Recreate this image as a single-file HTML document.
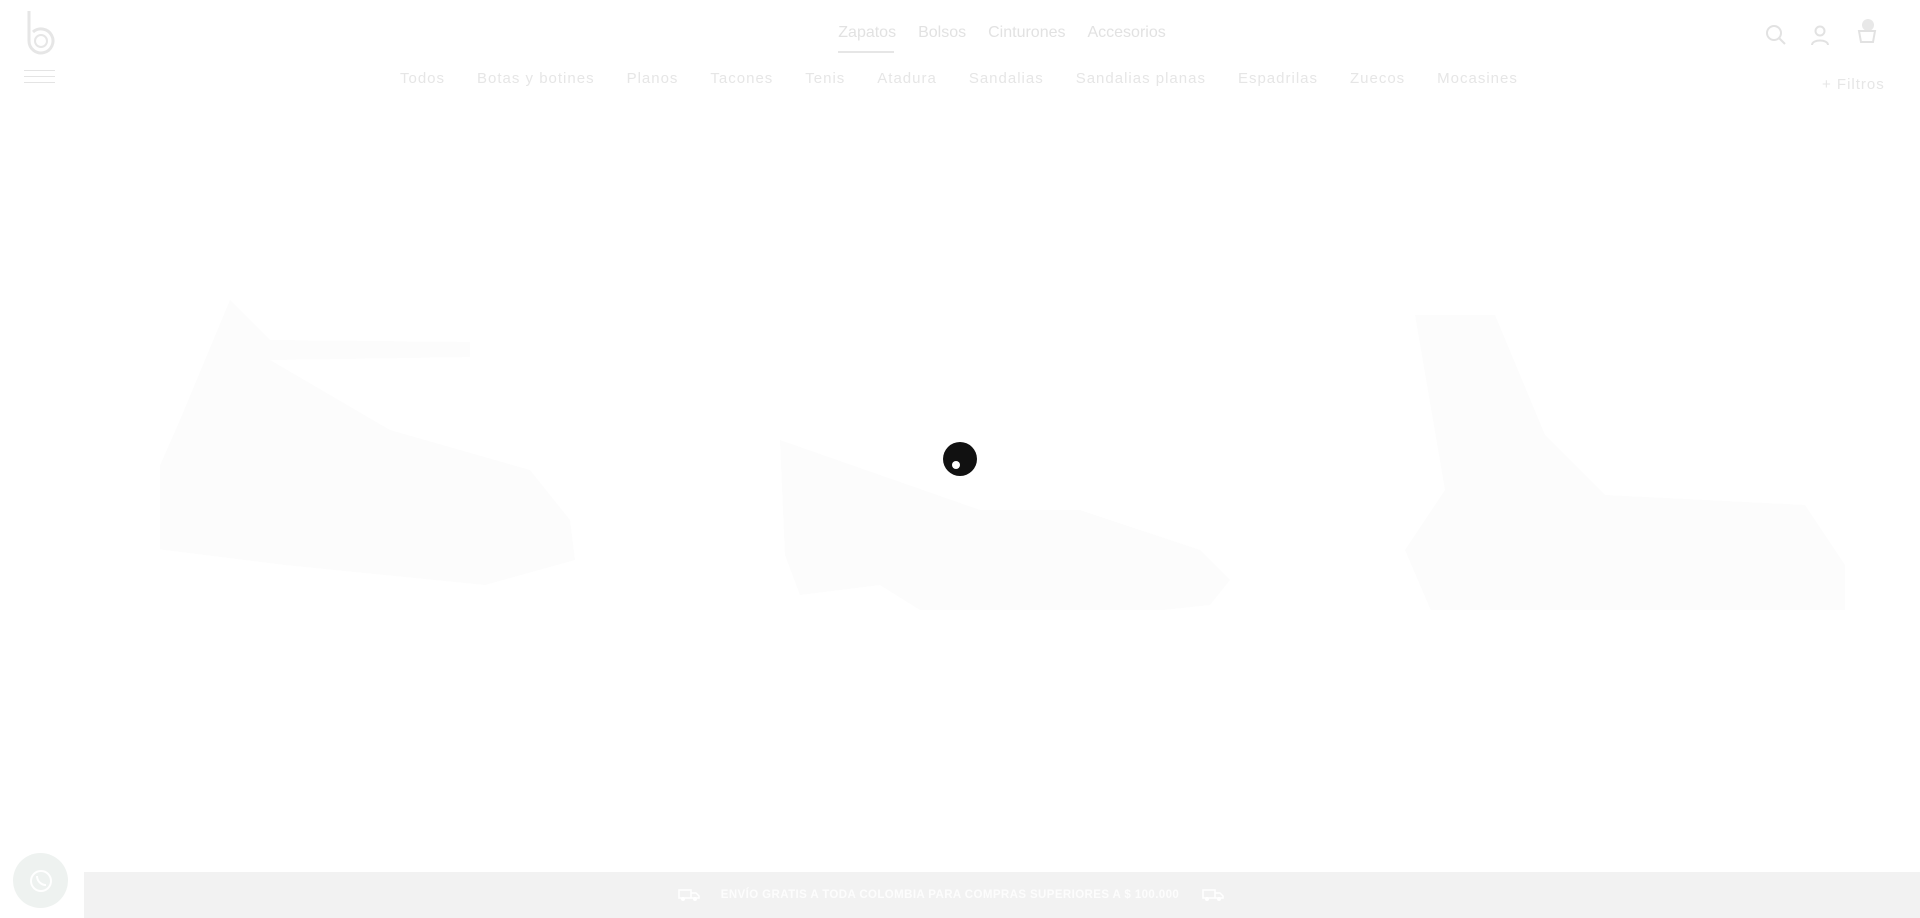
<!DOCTYPE html>
<html><head><meta charset="utf-8"><style>
*{margin:0;padding:0;box-sizing:border-box}
body{width:1920px;height:918px;background:#fff;position:relative;overflow:hidden;font-family:"Liberation Sans",sans-serif}
.a{position:absolute}
.nav{top:24px;left:0;width:1920px;padding-left:84px;text-align:center;font-size:16px;color:#e2e2e2;letter-spacing:0}
.nav span{margin:0 11px}
.sub{top:70px;left:400px;width:1118px;display:flex;justify-content:space-between;font-size:15px;color:#e6e6e6;letter-spacing:1px}
.bar{left:84px;top:872px;width:1836px;height:46px;background:#f2f2f2;text-align:center;line-height:46px;color:#fdfdfd;font-size:11.5px;letter-spacing:.4px;font-weight:bold;padding-right:104px}
</style></head><body>
<svg class="a" style="left:26px;top:9px" width="30" height="46" viewBox="0 0 30 46"><path d="M3 2v30a12 12 0 1 0 4-9" fill="none" stroke="#e6e6e6" stroke-width="3"/><circle cx="15" cy="32" r="6" fill="none" stroke="#e6e6e6" stroke-width="2"/></svg>
<div class="a" style="left:24px;top:70px;width:31px;height:1px;background:#e4e4e4;box-shadow:0 6px 0 #e4e4e4,0 12px 0 #e4e4e4"></div>
<div class="a nav"><span>Zapatos</span><span>Bolsos</span><span>Cinturones</span><span>Accesorios</span></div>
<div class="a" style="left:838px;top:51px;width:56px;height:2px;background:#e6e6e6"></div>
<div class="a sub"><span>Todos</span><span>Botas y botines</span><span>Planos</span><span>Tacones</span><span>Tenis</span><span>Atadura</span><span>Sandalias</span><span>Sandalias planas</span><span>Espadrilas</span><span>Zuecos</span><span>Mocasines</span></div>
<div class="a" style="left:1822px;top:76px;font-size:15px;color:#e6e6e6;letter-spacing:1px">+ Filtros</div>
<svg class="a" style="left:1765px;top:24px" width="22" height="22"><circle cx="9" cy="9" r="7" fill="none" stroke="#e2e2e2" stroke-width="2"/><path d="M14 14l6 6" stroke="#e2e2e2" stroke-width="2"/></svg>
<svg class="a" style="left:1810px;top:24px" width="20" height="22"><circle cx="10" cy="7" r="4.5" fill="none" stroke="#e2e2e2" stroke-width="2"/><path d="M2 21c0-6 16-6 16 0" fill="none" stroke="#e2e2e2" stroke-width="2"/></svg>
<svg class="a" style="left:1856px;top:17px" width="22" height="28"><circle cx="12" cy="8" r="6" fill="#e8e8e8"/><path d="M3 14h16l-2 11H5z" fill="none" stroke="#e2e2e2" stroke-width="2"/></svg>
<svg class="a" style="left:160px;top:290px" width="460" height="320"><path d="M20 130L70 10l40 40 200 2v15L110 70l120 70 140 40 40 50 5 40-90 25-200-20-160-20z" fill="#fcfcfc"/></svg>
<svg class="a" style="left:770px;top:430px" width="460" height="180"><path d="M10 10l200 70 100 0 120 40 30 30-20 25-140 15-150-10-40-25-80 10-15-40z" fill="#fcfcfc"/></svg>
<svg class="a" style="left:1385px;top:305px" width="460" height="305"><path d="M30 10l80 0 50 120 60 60 200 10 40 60 0 50-410 5-30-70 40-60z" fill="#fcfcfc"/></svg>
<div class="a" style="left:943px;top:442px;width:34px;height:34px;border-radius:50%;background:#111"></div>
<div class="a" style="left:952px;top:461px;width:8px;height:8px;border-radius:50%;background:#fff"></div>
<div class="a bar">ENVÍO GRATIS A TODA COLOMBIA PARA COMPRAS SUPERIORES A $ 100.000</div>
<svg class="a" style="left:677px;top:886px" width="24" height="16"><path d="M2 4h12v8H2zM14 7h5l3 3v2h-8z" fill="none" stroke="#fff" stroke-width="1.5"/><circle cx="6" cy="13" r="2" fill="#fff"/><circle cx="18" cy="13" r="2" fill="#fff"/></svg>
<svg class="a" style="left:1201px;top:886px" width="24" height="16"><path d="M2 4h12v8H2zM14 7h5l3 3v2h-8z" fill="none" stroke="#fff" stroke-width="1.5"/><circle cx="6" cy="13" r="2" fill="#fff"/><circle cx="18" cy="13" r="2" fill="#fff"/></svg>
<div class="a" style="left:13px;top:853px;width:55px;height:55px;border-radius:50%;background:#eef2f0"></div>
<svg class="a" style="left:28px;top:868px" width="26" height="26"><circle cx="13" cy="13" r="10" fill="none" stroke="#fff" stroke-width="2"/><path d="M9 8c0 5 4 9 9 9" fill="none" stroke="#fff" stroke-width="2"/></svg>
</body></html>
